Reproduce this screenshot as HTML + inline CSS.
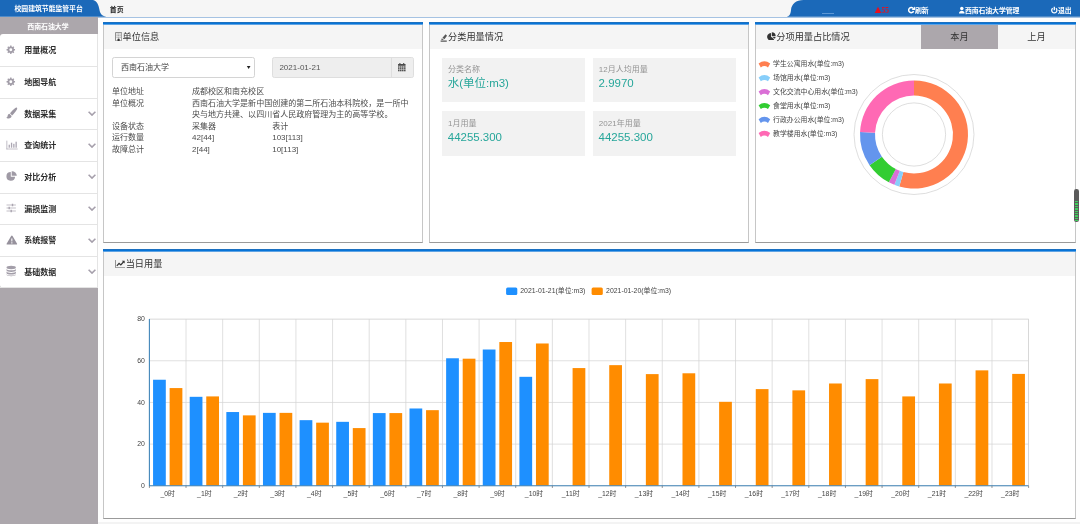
<!DOCTYPE html>
<html lang="zh-CN">
<head>
<meta charset="utf-8">
<title>校园建筑节能监管平台</title>
<style>
*{box-sizing:border-box;margin:0;padding:0}
html,body{width:1080px;height:524px;overflow:hidden}
body{position:relative;will-change:transform;background:#fefefe;font-family:"Liberation Sans","Noto Sans CJK SC",sans-serif;color:#333;font-size:8.03px;line-height:1}
.abs{position:absolute}
/* top bar */
#top{position:absolute;left:0;top:0;width:1080px;height:18px;background:#f6f6f6;border-bottom:1px solid #a6c3e3}
#top svg{position:absolute;left:0;top:0}
#top .t{position:absolute;top:0;height:17px;line-height:21px;color:#fff;font-weight:bold;font-size:6.88px;white-space:nowrap;letter-spacing:-0.1px}
#home{position:absolute;left:109.8px;top:0;height:17px;line-height:20.4px;font-size:6.88px;font-weight:bold;color:#222}
/* sidebar */
#side{position:absolute;left:0;top:17px;width:97.8px;height:507px;background:#aca7ac}
#side .org{height:17.6px;line-height:19.6px;text-align:center;color:#fff;font-size:6.88px;font-weight:bold;padding-right:2px}
#menu{position:absolute;left:0;top:17.2px;width:97.6px;height:253.6px;background:#fff;border-radius:3px 0 0 3px;border-right:1px solid #e4e4e4}
#menu .it{position:absolute;left:0;width:97px;margin-top:-17.2px;height:31.63px;border-bottom:1px solid #e4e4e4;font-size:8.03px;font-weight:bold;color:#2c2c2c;line-height:31.6px;padding-left:24.2px;white-space:nowrap}
#menu .it svg.ic{position:absolute;left:6.4px;top:8.5px;width:13px;height:12px}
#menu .it svg.ch{position:absolute;left:87.6px;top:12.6px;width:8px;height:5px}
/* panels */
.panel{position:absolute;background:#fff;border:1px solid #c6c6c6;border-bottom-color:#9a9a9a;border-top:0}
.panel::before{content:"";position:absolute;left:-1px;right:-1px;top:0;height:3px;background:linear-gradient(#1c70c0 0,#1c70c0 1px,#0674d8 1px,#0674d8 2px,#5fa3e3 2px,#5fa3e3 3px)}
.panel .hd{position:absolute;left:0;top:3px;right:0;height:23.8px;background:#f5f5f5;font-size:9.18px;color:#333;line-height:25px;white-space:nowrap}
.row{position:absolute;white-space:nowrap;font-size:8.03px;line-height:11.5px;color:#4c4c4c}
.tile{position:absolute;width:143.3px;height:45px;background:#f2f2f2}
.tile .l{position:absolute;left:5.8px;top:7.4px;font-size:8.03px;color:#949494;line-height:9px;white-space:nowrap}
.tile .v{position:absolute;left:5.6px;top:18.6px;font-size:11.47px;color:#26a69a;line-height:14px;white-space:nowrap}
</style>
</head>
<body>
<!-- TOP BAR -->
<div id="top">
  <svg width="1080" height="17" viewBox="0 0 1080 17">
    <path d="M0 0 H93 C97 1 98.8 5 99.5 10 C100.2 14 102.5 16.8 108.5 16.8 H0 Z" fill="#1b69b9"/>
    <path d="M1080 0 H803.5 C796 0 791.5 4 791 10 C790.6 14 789.5 16.8 785.5 16.8 H1080 Z" fill="#1b69b9"/>
    <rect x="822" y="13.1" width="12" height="0.8" fill="#6fa4dc"/>
    <path d="M878 6.8 L881.3 13.1 H874.7 Z" fill="#e60f1e"/>
    <g fill="none" stroke="#fff" stroke-width="1.5"><path d="M913.4 8.6 A2.6 2.6 0 1 0 913.6 11.2"/></g>
    <path d="M915 6.6 V10 H911.6 Z" fill="#fff"/>
    <circle cx="961.8" cy="8.6" r="1.75" fill="#fff"/><path d="M959 13.4 C959 9.9 964.6 9.9 964.6 13.4 Z" fill="#fff"/>
    <g fill="none" stroke="#fff" stroke-width="1.3"><path d="M1052.7 8.3 A2.6 2.6 0 1 0 1055.9 8.3"/><path d="M1054.3 6.8 V10.2"/></g>
  </svg>
  <div class="t" style="left:14.5px;letter-spacing:-0.05px;line-height:18.6px">校园建筑节能监管平台</div>
  <div class="t" style="left:881.6px;color:#e8101c;font-family:'Liberation Serif',serif;font-weight:bold;font-size:7.4px">55</div>
  <div class="t" style="left:915px">刷新</div>
  <div class="t" style="left:965px">西南石油大学管理</div>
  <div class="t" style="left:1058px">退出</div>
  <div id="home">首页</div>
</div>

<!-- SIDEBAR -->
<div id="side">
  <div class="org">西南石油大学</div>
  <div id="menu">
    <div class="it" style="top:18.37px"><svg class="ic" viewBox="0 0 26 24"><path fill-rule="evenodd" fill="#a39ea9" d="M8.25 2.91 L10.95 2.91 L11.01 4.85 L13.23 5.77 L14.65 4.44 L16.56 6.35 L15.23 7.77 L16.15 9.99 L18.09 10.05 L18.09 12.75 L16.15 12.81 L15.23 15.03 L16.56 16.45 L14.65 18.36 L13.23 17.03 L11.01 17.95 L10.95 19.89 L8.25 19.89 L8.19 17.95 L5.97 17.03 L4.55 18.36 L2.64 16.45 L3.97 15.03 L3.05 12.81 L1.11 12.75 L1.11 10.05 L3.05 9.99 L3.97 7.77 L2.64 6.35 L4.55 4.44 L5.97 5.77 L8.19 4.85 Z M6.70 11.40 a2.9 2.9 0 1 0 5.8 0 a2.9 2.9 0 1 0 -5.8 0 Z"/></svg>用量概况</div>
    <div class="it" style="top:50.00px"><svg class="ic" viewBox="0 0 26 24"><path fill-rule="evenodd" fill="#a39ea9" d="M8.25 2.91 L10.95 2.91 L11.01 4.85 L13.23 5.77 L14.65 4.44 L16.56 6.35 L15.23 7.77 L16.15 9.99 L18.09 10.05 L18.09 12.75 L16.15 12.81 L15.23 15.03 L16.56 16.45 L14.65 18.36 L13.23 17.03 L11.01 17.95 L10.95 19.89 L8.25 19.89 L8.19 17.95 L5.97 17.03 L4.55 18.36 L2.64 16.45 L3.97 15.03 L3.05 12.81 L1.11 12.75 L1.11 10.05 L3.05 9.99 L3.97 7.77 L2.64 6.35 L4.55 4.44 L5.97 5.77 L8.19 4.85 Z M6.70 11.40 a2.9 2.9 0 1 0 5.8 0 a2.9 2.9 0 1 0 -5.8 0 Z"/></svg>地图导航</div>
    <div class="it" style="top:81.63px"><svg class="ic" viewBox="0 0 26 24"><path fill="#9c97a2" d="M21.4 1.2 C22.8 2.2 22.6 3.8 21.8 5.2 C19 10 15.6 14 12.2 16.8 L8 12.6 C10.8 9 14.6 5 18.6 2 C19.6 1.2 20.6 .7 21.4 1.2 Z M6.8 13.6 L11.2 18 C11.2 21.2 8.4 22.9 5 22.9 C3 22.9 1.4 22.2 .8 21 C2.4 20.6 3 19.8 3.2 18.2 C3.5 15.6 4.8 13.8 6.8 13.6 Z"/></svg>数据采集<svg class="ch" viewBox="0 0 16 10"><path d="M1.2 1.4 L8 8.2 L14.8 1.4" fill="none" stroke="#a59fab" stroke-width="3.1"/></svg></div>
    <div class="it" style="top:113.26px"><svg class="ic" viewBox="0 0 26 24"><g fill="#aca7b3"><rect x="1" y="3.3" width="1.5" height="17.4"/><rect x="1" y="19.3" width="22.4" height="1.4"/><rect x="5.2" y="11.4" width="2.6" height="6"/><rect x="9.8" y="7.4" width="2.6" height="10"/><rect x="14.4" y="9.6" width="2.6" height="7.8"/><rect x="19" y="5.4" width="2.6" height="12"/></g></svg>查询统计<svg class="ch" viewBox="0 0 16 10"><path d="M1.2 1.4 L8 8.2 L14.8 1.4" fill="none" stroke="#a59fab" stroke-width="3.1"/></svg></div>
    <div class="it" style="top:144.89px"><svg class="ic" viewBox="0 0 26 24"><g fill="#9f9aa5"><path d="M9.6 4 A8.7 8.7 0 1 0 18.2 13.4 H9.6 Z"/><path d="M11.4 2.4 A9.6 9.6 0 0 1 21.6 11.6 H11.4 Z"/></g></svg>对比分析<svg class="ch" viewBox="0 0 16 10"><path d="M1.2 1.4 L8 8.2 L14.8 1.4" fill="none" stroke="#a59fab" stroke-width="3.1"/></svg></div>
    <div class="it" style="top:176.52px"><svg class="ic" viewBox="0 0 26 24"><g fill="#aaa5b0"><rect x="1" y="5.3" width="18.8" height="1.4"/><rect x="1" y="11.3" width="18.8" height="1.4"/><rect x="1" y="17.3" width="18.8" height="1.4"/><rect x="11.6" y="3.5" width="2.8" height="5"/><rect x="5" y="9.5" width="2.8" height="5"/><rect x="9" y="15.5" width="2.8" height="5"/></g></svg>漏损监测<svg class="ch" viewBox="0 0 16 10"><path d="M1.2 1.4 L8 8.2 L14.8 1.4" fill="none" stroke="#a59fab" stroke-width="3.1"/></svg></div>
    <div class="it" style="top:208.15px"><svg class="ic" viewBox="0 0 26 24"><path fill="#96919c" fill-rule="evenodd" d="M11.7 3 C12.3 3 12.8 3.4 13.1 3.9 L22.2 19.4 C22.6 20.2 22.1 21 21.2 21 H2.2 C1.3 21 .8 20.2 1.2 19.4 L10.3 3.9 C10.6 3.4 11.1 3 11.7 3 Z M10.5 8.8 L10.8 15 H12.6 L12.9 8.8 Z M10.6 16.4 V18.8 H12.8 V16.4 Z"/></svg>系统报警<svg class="ch" viewBox="0 0 16 10"><path d="M1.2 1.4 L8 8.2 L14.8 1.4" fill="none" stroke="#a59fab" stroke-width="3.1"/></svg></div>
    <div class="it" style="top:239.78px"><svg class="ic" viewBox="0 0 26 24"><g fill="#a39ea9"><ellipse cx="10.4" cy="5" rx="9.4" ry="3.3"/><path d="M1 7.4 C1 11.6 19.8 11.6 19.8 7.4 V10.6 C19.8 14.8 1 14.8 1 10.6 Z"/><path d="M1 12.6 C1 16.8 19.8 16.8 19.8 12.6 V15.8 C19.8 20 1 20 1 15.8 Z"/><path d="M1 17.8 C1 22 19.8 22 19.8 17.8 V19 C19.8 23.4 1 23.4 1 19 Z"/></g></svg>基础数据<svg class="ch" viewBox="0 0 16 10"><path d="M1.2 1.4 L8 8.2 L14.8 1.4" fill="none" stroke="#a59fab" stroke-width="3.1"/></svg></div>
  </div>
</div>

<div class="abs" style="left:98px;top:522px;width:982px;height:2px;background:#f3f3f3"></div>
<!-- PANEL 1 -->
<div class="panel" style="left:103px;top:22px;width:320px;height:221px">
  <div class="hd"><span style="position:absolute;left:18.6px">单位信息</span>
    <svg class="abs" style="left:10.7px;top:6.8px" width="7.2" height="9.3" viewBox="0 0 12 17" preserveAspectRatio="none"><rect x=".7" y=".7" width="10.6" height="15.6" rx=".8" fill="none" stroke="#6a6a6a" stroke-width="1.4"/><g fill="#9a9a9a"><rect x="2.6" y="2.8" width="1.8" height="1.8"/><rect x="5.1" y="2.8" width="1.8" height="1.8"/><rect x="7.6" y="2.8" width="1.8" height="1.8"/><rect x="2.6" y="5.8" width="1.8" height="1.8"/><rect x="5.1" y="5.8" width="1.8" height="1.8"/><rect x="7.6" y="5.8" width="1.8" height="1.8"/><rect x="2.6" y="8.8" width="1.8" height="1.8"/><rect x="5.1" y="8.8" width="1.8" height="1.8"/><rect x="7.6" y="8.8" width="1.8" height="1.8"/></g><path d="M4.2 16.3 V13.6 A1.8 1.8 0 0 1 7.8 13.6 V16.3 Z" fill="#333"/></svg>
  </div>
</div>
<div class="abs" style="left:112px;top:57.4px;width:142.6px;height:20.2px;border:1px solid #d4d4d4;border-radius:2.4px;background:#fff;font-size:8.03px;line-height:20.8px;padding-left:8px;color:#444">西南石油大学<span style="position:absolute;left:132.4px;top:-1.2px;font-size:6.4px;color:#222;transform:scaleY(.8)">▼</span></div>
<div class="abs" style="left:272px;top:57.4px;width:142px;height:20.2px;border:1px solid #dedede;border-radius:2.4px;background:#eee;font-size:8.03px;line-height:19.6px;padding-left:6.4px;color:#555;overflow:hidden">2021-01-21
  <div class="abs" style="left:118px;top:0;width:24px;height:20px;border-left:1px solid #dedede;background:#eee"></div>
  <svg class="abs" style="left:125px;top:4.8px" width="7.6" height="8.5" viewBox="0 0 15 17"><g fill="#4a4a4a"><rect x="0" y="2" width="15" height="3.6"/><rect x="2.6" y="0" width="2.2" height="3"/><rect x="10.2" y="0" width="2.2" height="3"/><rect x="0" y="6.6" width="3" height="2.8"/><rect x="4" y="6.6" width="3" height="2.8"/><rect x="8" y="6.6" width="3" height="2.8"/><rect x="12" y="6.6" width="3" height="2.8"/><rect x="0" y="10.2" width="3" height="2.8"/><rect x="4" y="10.2" width="3" height="2.8"/><rect x="8" y="10.2" width="3" height="2.8"/><rect x="12" y="10.2" width="3" height="2.8"/><rect x="0" y="13.8" width="3" height="2.8"/><rect x="4" y="13.8" width="3" height="2.8"/><rect x="8" y="13.8" width="3" height="2.8"/><rect x="12" y="13.8" width="3" height="2.8"/></g></svg>
</div>
<div class="row" style="left:112px;top:86.3px">单位地址</div><div class="row" style="left:192px;top:86.3px">成都校区和南充校区</div>
<div class="row" style="left:112px;top:97.8px">单位概况</div><div class="row" style="left:192px;top:97.8px">西南石油大学是新中国创建的第二所石油本科院校，是一所中</div>
<div class="row" style="left:192px;top:109.3px">央与地方共建、以四川省人民政府管理为主的高等学校。</div>
<div class="row" style="left:112px;top:120.9px">设备状态</div><div class="row" style="left:192px;top:120.9px">采集器</div><div class="row" style="left:272.2px;top:120.9px">表计</div>
<div class="row" style="left:112px;top:132.4px">运行数量</div><div class="row" style="left:192px;top:132.4px">42[44]</div><div class="row" style="left:272.2px;top:132.4px">103[113]</div>
<div class="row" style="left:112px;top:143.9px">故障总计</div><div class="row" style="left:192px;top:143.9px">2[44]</div><div class="row" style="left:272.2px;top:143.9px">10[113]</div>

<!-- PANEL 2 -->
<div class="panel" style="left:429px;top:22px;width:320px;height:221px">
  <div class="hd"><span style="position:absolute;left:18.1px">分类用量情况</span>
    <svg class="abs" style="left:10.2px;top:8.6px" width="7.4" height="8" viewBox="0 0 12 13" preserveAspectRatio="none"><path d="M1 12.4 H11 V10.6 H1 Z M2 9.6 L3 7 L6.4 9.4 Z M4 6 L9 .6 L11.4 3 L7.2 8.4 Z" fill="#555"/></svg>
  </div>
</div>
<div class="tile" style="left:442.2px;top:57.6px;height:44.6px"><div class="l">分类名称</div><div class="v">水(单位:m3)</div></div>
<div class="tile" style="left:593px;top:57.6px;height:44.6px"><div class="l">12月人均用量</div><div class="v">2.9970</div></div>
<div class="tile" style="left:442.2px;top:111.2px"><div class="l">1月用量</div><div class="v">44255.300</div></div>
<div class="tile" style="left:593px;top:111.2px"><div class="l">2021年用量</div><div class="v">44255.300</div></div>

<!-- PANEL 3 -->
<div class="panel" style="left:755px;top:22px;width:321px;height:221px">
  <div class="hd"><span style="position:absolute;left:20.3px">分项用量占比情况</span>
    <svg class="abs" style="left:11px;top:6.7px" width="8.8" height="8.8" viewBox="0 0 20 20"><path d="M9.2 2 A9 9 0 1 0 16.4 16.6 L9.2 10.8 Z" fill="#333"/><path d="M11 0.4 A9 9 0 0 1 19.8 9 H11 Z" fill="#333"/><path d="M11.4 10.8 H19.6 A9 9 0 0 1 17.8 15.2 Z" fill="#333"/></svg>
    <div class="abs" style="left:164.8px;top:0;width:77.2px;height:24px;background:#aca7ac;text-align:center">本月</div>
    <div class="abs" style="left:242px;top:0;width:77px;height:24px;text-align:center">上月</div>
  </div>
</div>
<svg class="abs" style="left:755px;top:49px" width="320" height="192" viewBox="755 49 320 192" font-family="'Liberation Sans','Noto Sans CJK SC',sans-serif">
  <circle cx="914" cy="134.5" r="60" fill="none" stroke="#d0d0d0" stroke-width="0.7"/>
  <circle cx="914" cy="134.5" r="31.6" fill="none" stroke="#d0d0d0" stroke-width="0.7"/>
  <path d="M914 80.5 A54 54 0 1 1 899.3 186.46 L903.38 172.03 A39 39 0 1 0 914 95.5 Z" fill="#ff7f50"/>
  <path d="M899.3 186.46 A54 54 0 0 1 894.38 184.81 L899.83 170.84 A39 39 0 0 0 903.38 172.03 Z" fill="#87cefa"/>
  <path d="M894.38 184.81 A54 54 0 0 1 888.82 182.27 L895.81 169 A39 39 0 0 0 899.83 170.84 Z" fill="#da70d6"/>
  <path d="M888.82 182.27 A54 54 0 0 1 869.55 165.16 L881.9 156.65 A39 39 0 0 0 895.81 169 Z" fill="#32cd32"/>
  <path d="M869.55 165.16 A54 54 0 0 1 860.06 132.05 L875.04 132.73 A39 39 0 0 0 881.9 156.65 Z" fill="#6495ed"/>
  <path d="M860.06 132.05 A54 54 0 0 1 914 80.5 V95.5 A39 39 0 0 0 875.04 132.73 Z" fill="#ff69b4"/>
  <g font-size="6.88" fill="#444">
    <path d="M758.6 63.60 Q764.4 58.80 770.2 63.60 L768 67.40 Q764.4 64.60 760.8 67.40 Z" fill="#ff7f50"/><text x="773.1" y="66.00">学生公寓用水(单位:m3)</text>
    <path d="M758.6 77.50 Q764.4 72.70 770.2 77.50 L768 81.30 Q764.4 78.50 760.8 81.30 Z" fill="#87cefa"/><text x="773.1" y="79.90">场馆用水(单位:m3)</text>
    <path d="M758.6 91.40 Q764.4 86.60 770.2 91.40 L768 95.20 Q764.4 92.40 760.8 95.20 Z" fill="#da70d6"/><text x="773.1" y="93.80">文化交流中心用水(单位:m3)</text>
    <path d="M758.6 105.30 Q764.4 100.50 770.2 105.30 L768 109.10 Q764.4 106.30 760.8 109.10 Z" fill="#32cd32"/><text x="773.1" y="107.70">食堂用水(单位:m3)</text>
    <path d="M758.6 119.20 Q764.4 114.40 770.2 119.20 L768 123.00 Q764.4 120.20 760.8 123.00 Z" fill="#6495ed"/><text x="773.1" y="121.60">行政办公用水(单位:m3)</text>
    <path d="M758.6 133.10 Q764.4 128.30 770.2 133.10 L768 136.90 Q764.4 134.10 760.8 136.90 Z" fill="#ff69b4"/><text x="773.1" y="135.50">教学楼用水(单位:m3)</text>
  </g>
</svg>
<!-- right pill -->
<div class="abs" style="left:1074.2px;top:189px;width:4.6px;height:33px;border-radius:2.3px;background:#5b5b5b"></div>
<div class="abs" style="left:1075px;top:200.5px;width:3px;height:20px;background:repeating-linear-gradient(#3fcf5c 0 1.4px,#5b5b5b 1.4px 2.4px)"></div>

<!-- PANEL 4 -->
<div class="panel" style="left:103px;top:249px;width:973px;height:270.4px">
  <div class="hd"><span style="position:absolute;left:21.7px">当日用量</span>
    <svg class="abs" style="left:10.5px;top:7.6px" width="10.7" height="8.2" viewBox="0 0 21 16"><path d="M.9 0 V15.1 H21" fill="none" stroke="#777" stroke-width="1.6"/><path d="M3.6 11.6 L8 6.6 L11.4 9.6 L17 3.4" fill="none" stroke="#333" stroke-width="2.4"/><path d="M13.4 1.4 H19 V7 Z" fill="#333"/></svg>
  </div>
</div>
<svg id="chart" class="abs" style="left:104px;top:277px" width="970" height="240" viewBox="104 277 970 240" font-family="'Liberation Sans','Noto Sans CJK SC',sans-serif">
<rect x="149.4" y="319.1" width="879.20" height="166.70" fill="none" stroke="#c8c8c8" stroke-width="0.7"/>
<path d="M186.03 319.1 V485.8 M222.67 319.1 V485.8 M259.30 319.1 V485.8 M295.93 319.1 V485.8 M332.57 319.1 V485.8 M369.20 319.1 V485.8 M405.83 319.1 V485.8 M442.47 319.1 V485.8 M479.10 319.1 V485.8 M515.73 319.1 V485.8 M552.37 319.1 V485.8 M589.00 319.1 V485.8 M625.63 319.1 V485.8 M662.27 319.1 V485.8 M698.90 319.1 V485.8 M735.53 319.1 V485.8 M772.17 319.1 V485.8 M808.80 319.1 V485.8 M845.43 319.1 V485.8 M882.07 319.1 V485.8 M918.70 319.1 V485.8 M955.33 319.1 V485.8 M991.97 319.1 V485.8 M149.4 444.12 H1028.6 M149.4 402.45 H1028.6 M149.4 360.78 H1028.6" fill="none" stroke="#d2d2d2" stroke-width="0.7"/>
<rect x="153.06" y="379.74" width="12.74" height="106.06" fill="#1e90ff"/>
<rect x="189.70" y="396.82" width="12.74" height="88.98" fill="#1e90ff"/>
<rect x="226.33" y="412.04" width="12.74" height="73.76" fill="#1e90ff"/>
<rect x="262.96" y="412.87" width="12.74" height="72.93" fill="#1e90ff"/>
<rect x="299.60" y="420.16" width="12.74" height="65.64" fill="#1e90ff"/>
<rect x="336.23" y="421.83" width="12.74" height="63.97" fill="#1e90ff"/>
<rect x="372.86" y="413.08" width="12.74" height="72.72" fill="#1e90ff"/>
<rect x="409.50" y="408.49" width="12.74" height="77.31" fill="#1e90ff"/>
<rect x="446.13" y="358.27" width="12.74" height="127.53" fill="#1e90ff"/>
<rect x="482.76" y="349.52" width="12.74" height="136.28" fill="#1e90ff"/>
<rect x="519.40" y="376.82" width="12.74" height="108.98" fill="#1e90ff"/>
<rect x="169.63" y="388.07" width="12.74" height="97.73" fill="#ff8c00"/>
<rect x="206.26" y="396.41" width="12.74" height="89.39" fill="#ff8c00"/>
<rect x="242.89" y="415.37" width="12.74" height="70.43" fill="#ff8c00"/>
<rect x="279.53" y="412.87" width="12.74" height="72.93" fill="#ff8c00"/>
<rect x="316.16" y="422.66" width="12.74" height="63.14" fill="#ff8c00"/>
<rect x="352.79" y="428.08" width="12.74" height="57.72" fill="#ff8c00"/>
<rect x="389.43" y="413.08" width="12.74" height="72.72" fill="#ff8c00"/>
<rect x="426.06" y="410.16" width="12.74" height="75.64" fill="#ff8c00"/>
<rect x="462.69" y="358.69" width="12.74" height="127.11" fill="#ff8c00"/>
<rect x="499.33" y="342.02" width="12.74" height="143.78" fill="#ff8c00"/>
<rect x="535.96" y="343.48" width="12.74" height="142.32" fill="#ff8c00"/>
<rect x="572.59" y="368.07" width="12.74" height="117.73" fill="#ff8c00"/>
<rect x="609.23" y="365.15" width="12.74" height="120.65" fill="#ff8c00"/>
<rect x="645.86" y="374.11" width="12.74" height="111.69" fill="#ff8c00"/>
<rect x="682.49" y="373.28" width="12.74" height="112.52" fill="#ff8c00"/>
<rect x="719.13" y="401.82" width="12.74" height="83.98" fill="#ff8c00"/>
<rect x="755.76" y="389.11" width="12.74" height="96.69" fill="#ff8c00"/>
<rect x="792.39" y="390.36" width="12.74" height="95.44" fill="#ff8c00"/>
<rect x="829.03" y="383.49" width="12.74" height="102.31" fill="#ff8c00"/>
<rect x="865.66" y="379.11" width="12.74" height="106.69" fill="#ff8c00"/>
<rect x="902.29" y="396.41" width="12.74" height="89.39" fill="#ff8c00"/>
<rect x="938.93" y="383.49" width="12.74" height="102.31" fill="#ff8c00"/>
<rect x="975.56" y="370.36" width="12.74" height="115.44" fill="#ff8c00"/>
<rect x="1012.19" y="373.90" width="12.74" height="111.90" fill="#ff8c00"/>
<path d="M149.4 319.1 V486.3 M148.9 485.8 H1028.6" fill="none" stroke="#4488bb" stroke-width="1.1"/>
<path d="M149.40 485.8 V488.0 M186.03 485.8 V488.0 M222.67 485.8 V488.0 M259.30 485.8 V488.0 M295.93 485.8 V488.0 M332.57 485.8 V488.0 M369.20 485.8 V488.0 M405.83 485.8 V488.0 M442.47 485.8 V488.0 M479.10 485.8 V488.0 M515.73 485.8 V488.0 M552.37 485.8 V488.0 M589.00 485.8 V488.0 M625.63 485.8 V488.0 M662.27 485.8 V488.0 M698.90 485.8 V488.0 M735.53 485.8 V488.0 M772.17 485.8 V488.0 M808.80 485.8 V488.0 M845.43 485.8 V488.0 M882.07 485.8 V488.0 M918.70 485.8 V488.0 M955.33 485.8 V488.0 M991.97 485.8 V488.0 M1028.60 485.8 V488.0" fill="none" stroke="#555" stroke-width="0.6"/>
<g font-size="6.88" fill="#444" text-anchor="middle">
<text x="167.72" y="495.6">_0时</text>
<text x="204.35" y="495.6">_1时</text>
<text x="240.98" y="495.6">_2时</text>
<text x="277.62" y="495.6">_3时</text>
<text x="314.25" y="495.6">_4时</text>
<text x="350.88" y="495.6">_5时</text>
<text x="387.52" y="495.6">_6时</text>
<text x="424.15" y="495.6">_7时</text>
<text x="460.78" y="495.6">_8时</text>
<text x="497.42" y="495.6">_9时</text>
<text x="534.05" y="495.6">_10时</text>
<text x="570.68" y="495.6">_11时</text>
<text x="607.32" y="495.6">_12时</text>
<text x="643.95" y="495.6">_13时</text>
<text x="680.58" y="495.6">_14时</text>
<text x="717.22" y="495.6">_15时</text>
<text x="753.85" y="495.6">_16时</text>
<text x="790.48" y="495.6">_17时</text>
<text x="827.12" y="495.6">_18时</text>
<text x="863.75" y="495.6">_19时</text>
<text x="900.38" y="495.6">_20时</text>
<text x="937.02" y="495.6">_21时</text>
<text x="973.65" y="495.6">_22时</text>
<text x="1010.28" y="495.6">_23时</text>
</g>
<g font-size="6.88" fill="#444" text-anchor="end">
<text x="144.9" y="488.00">0</text>
<text x="144.9" y="446.32">20</text>
<text x="144.9" y="404.65">40</text>
<text x="144.9" y="362.98">60</text>
<text x="144.9" y="321.30">80</text>
</g>
<rect x="506.1" y="287.4" width="11.2" height="7.6" rx="1.5" fill="#1e90ff"/><text x="520.3" y="293.3" font-size="6.88" fill="#444">2021-01-21(单位:m3)</text>
<rect x="591.6" y="287.4" width="11.2" height="7.6" rx="1.5" fill="#ff8c00"/><text x="606.1" y="293.3" font-size="6.88" fill="#444">2021-01-20(单位:m3)</text>
</svg>
</body>
</html>
